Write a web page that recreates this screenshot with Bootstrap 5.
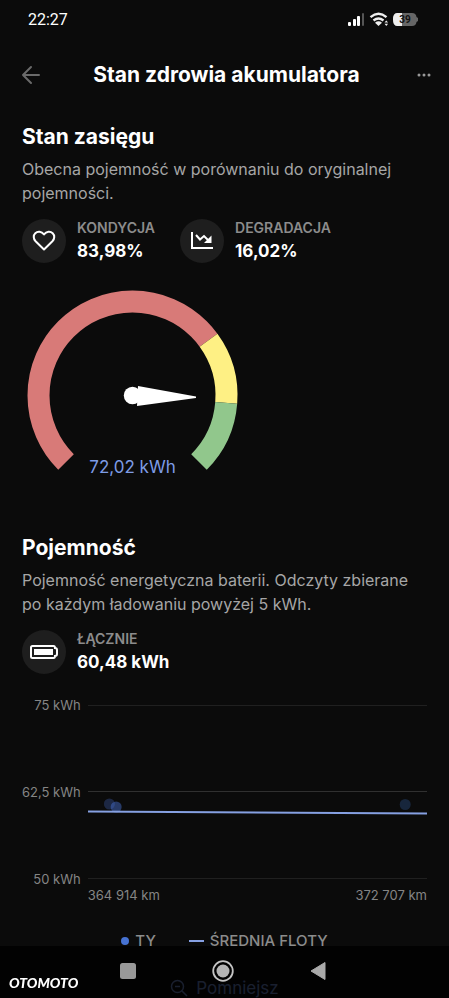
<!DOCTYPE html>
<html lang="pl" data-bs-theme="dark">
<head>
<meta charset="utf-8">
<meta name="viewport" content="width=device-width, initial-scale=1">
<title>Stan zdrowia akumulatora</title>
<link href="https://cdn.jsdelivr.net/npm/bootstrap@5.3.0/dist/css/bootstrap.min.css" rel="stylesheet">
<style>
  body { font-family: Inter, "Liberation Sans", sans-serif; background: #0b0b0b; color: #fff; }
  .status-bar { height: 40px; padding: 0 30px 0 28px; font-family: Roboto, sans-serif; font-size: 16px; }
  .top-bar { height: 70px; padding: 0 16px 0 20px; }
  .top-bar h1 { font-size: 21px; line-height: 28px; font-weight: 700; }
  .icon-btn { width: 24px; height: 24px; color: #6a6a6a; }
  .screen { padding: 13px 22px 0; }
  .screen h2 { font-size: 21px; line-height: 28px; font-weight: 700; margin: 0 0 6px; }
  .lead-text { font-size: 16px; line-height: 24px; color: #a6a6a6; margin: 0 0 13px; }
  .stats { gap: 25px; }
  .stat { gap: 11px; }
  .stat-icon { width: 44px; height: 44px; background: #1e1e1e; }
  .stat dt { font-size: 14px; line-height: 20px; font-weight: 600; color: #8c8c8c; }
  .stat dd { font-size: 17px; line-height: 26px; font-weight: 700; margin: 0; }
  .gauge { width: 220px; margin: 21px 0 55px; }
  .chart { gap: 7px; margin-top: 20px; font-size: 13px; line-height: 20px; color: #858585; }
  .plot { height: 194px; }
  .axis-x { margin-top: -4px; }
  .legend-row { gap: 33px; margin-top: 26px; font-size: 15px; line-height: 20px; font-weight: 500; color: #8c8c8c; }
  .legend-row span { gap: 6px; }
  .zoom-out { font-size: 17px; line-height: 18px; color: #7e9ce6; margin-top: 28px; }
  .system-nav { height: 52px; padding: 0 4px 2px 0; background: rgba(0, 0, 0, .8); }
  .system-nav .keys { gap: 73px; }
  .brand-name { left: 9px; bottom: 5px; font-family: Lato, sans-serif; font-size: 14px; line-height: 20px; font-weight: 900; font-style: italic; }
</style>
<script src="https://cdn.jsdelivr.net/npm/bootstrap@5.3.0/dist/js/bootstrap.bundle.min.js" defer></script>
</head>
<body class="vh-100 overflow-hidden">

<div class="status-bar d-flex align-items-center justify-content-between">
  <span>22:27</span>
  <svg width="72" height="16" viewBox="0 0 72 16" aria-label="Bateria 39%">
    <g fill="#fff"><rect x="1" y="10" width="3" height="4" rx="1"/><rect x="6" y="7" width="3" height="7" rx="1"/><rect x="10" y="4" width="3" height="10" rx="1"/></g>
    <rect x="15" y="1" width="2" height="13" rx="1" fill="#555"/>
    <g fill="none" stroke="#eee" stroke-width="2.4"><path d="M23.500 5.200Q31.500-1.500 39.500 5.200"/><path d="M26.500 8.500Q31.500 4.500 36.500 8.500"/></g>
    <path d="M28 10.700Q31.500 8 35 10.700L31.500 14Z" fill="#eee"/>
    <path d="M37.500 10.500l1.800-2 1.800 2zM37.500 11.700h3.600l-1.800 2.300z" fill="#eee"/>
    <path d="M50 1H65Q69 1 69.500 5L71 6V9L69.500 10Q69 14 65 14H50Q46 14 46 7.500T50 1Z" fill="#666"/>
    <path d="M55 1H50Q46 1 46 7.500T50 14H55Z" fill="#eee"/>
    <text x="58" y="11" text-anchor="middle" font-size="10" font-weight="700" fill="#111">39</text>
  </svg>
</div>

<header class="top-bar d-flex align-items-center justify-content-between">
  <button type="button" class="btn icon-btn p-0 border-0 d-flex" aria-label="Wstecz">
    <svg width="24" height="24" viewBox="0 0 24 24" fill="none" stroke="currentColor" stroke-width="2" stroke-linecap="round" stroke-linejoin="round"><path d="M19 12H3M11 4l-8 8 8 8"/></svg>
  </button>
  <h1 class="m-0">Stan zdrowia akumulatora</h1>
  <button type="button" class="btn icon-btn p-0 border-0 d-flex" aria-label="Więcej">
    <svg width="24" height="24" viewBox="0 0 24 24" fill="#999"><circle cx="10" cy="12" r="1.500"/><circle cx="15" cy="12" r="1.500"/><circle cx="20" cy="12" r="1.500"/></svg>
  </button>
</header>

<main class="screen">
  <section>
    <h2>Stan zasięgu</h2>
    <p class="lead-text">Obecna pojemność w porównaniu do oryginalnej pojemności.</p>
    <div class="stats d-flex">
      <div class="stat d-flex align-items-center">
        <span class="stat-icon rounded-circle d-flex align-items-center justify-content-center">
          <svg width="24" height="24" viewBox="0 0 24 24" fill="none" stroke="#fff" stroke-width="2" stroke-linejoin="round"><path d="M12 20.500L3.600 12.300C1.200 9.800 1.200 6.300 3.300 4.300C5.600 2.100 9.500 2.300 12 5.400C14.500 2.300 18.400 2.100 20.700 4.300C22.800 6.300 22.800 9.800 20.400 12.300Z"/></svg>
        </span>
        <dl class="m-0"><dt>KONDYCJA</dt><dd>83,98%</dd></dl>
      </div>
      <div class="stat d-flex align-items-center">
        <span class="stat-icon rounded-circle d-flex align-items-center justify-content-center">
          <svg width="24" height="24" viewBox="0 0 24 24" fill="none" stroke="#fff" stroke-width="2"><path d="M2 3V19H23M6 6l4 4.500 4-3.500 6 6"/><path d="M21.500 6.500V14H14Z" fill="#fff" stroke="none"/></svg>
        </span>
        <dl class="m-0"><dt>DEGRADACJA</dt><dd>16,02%</dd></dl>
      </div>
    </div>
    <svg class="gauge d-block" viewBox="0 0 220 194" role="img" aria-label="72,02 kWh">
      <g fill="none" stroke-width="22">
        <circle cx="110.500" cy="110.500" r="94" pathLength="360" stroke="#d87a78" stroke-dasharray="189 171" transform="rotate(135 110.500 110.500)"/>
        <circle cx="110.500" cy="110.500" r="94" pathLength="360" stroke="#fef084" stroke-dasharray="40.500 319.500" transform="rotate(-36 110.500 110.500)"/>
        <circle cx="110.500" cy="110.500" r="94" pathLength="360" stroke="#91c78c" stroke-dasharray="40.500 319.500" transform="rotate(4.500 110.500 110.500)"/>
      </g>
      <g fill="#fff"><circle cx="110.500" cy="110.500" r="8.700"/><path d="M116 101L174 111.600V113L115 121Z"/></g>
      <text x="110.500" y="188" text-anchor="middle" font-size="17" fill="#7e9ce6">72,02 kWh</text>
    </svg>
  </section>

  <section>
    <h2>Pojemność</h2>
    <p class="lead-text">Pojemność energetyczna baterii. Odczyty zbierane po każdym ładowaniu powyżej 5 kWh.</p>
    <div class="stat d-flex align-items-center">
      <span class="stat-icon rounded-circle d-flex align-items-center justify-content-center">
        <svg width="30" height="16" viewBox="0 0 30 16"><path d="M3.500 2H24.500Q26 2 26 4Q28 4 28 6V10Q28 12 26 12Q26 14 24.500 14H3.500Q2 14 2 12.500V3.500Q2 2 3.500 2Z" fill="none" stroke="#fff" stroke-width="2"/><rect x="5" y="5" width="19" height="6" fill="#fff"/></svg>
      </span>
      <dl class="m-0"><dt>ŁĄCZNIE</dt><dd>60,48 kWh</dd></dl>
    </div>
    <div class="chart d-flex">
      <div class="plot d-flex flex-column justify-content-between text-end text-nowrap">
        <span>75 kWh</span><span>62,5 kWh</span><span>50 kWh</span>
      </div>
      <div class="flex-grow-1">
        <svg class="plot d-block w-100" role="img" aria-label="Pojemność według przebiegu">
          <g stroke="#202020"><path d="M0 10.500H2000"/><path d="M0 96.500H2000" stroke="#303030"/><path d="M0 183.500H2000"/></g>
          <g fill="#4a74d8"><circle cx="6.300%" cy="109" r="5.500" opacity=".28"/><circle cx="8.300%" cy="112" r="5.500" opacity=".45"/><circle cx="93.500%" cy="109.500" r="5.500" fill="#3566b0" opacity=".3"/></g>
          <line x1="0" y1="116.500" x2="100%" y2="118.500" stroke="#86a0e2" stroke-width="2"/>
        </svg>
        <div class="axis-x d-flex justify-content-between"><span>364 914 km</span><span>372 707 km</span></div>
      </div>
    </div>
    <div class="legend-row d-flex justify-content-center">
      <span class="d-flex align-items-center"><svg width="8" height="8"><circle cx="4" cy="4" r="4" fill="#4672d2"/></svg>TY</span>
      <span class="d-flex align-items-center"><svg width="15" height="2"><rect width="15" height="2" fill="#86a0e2"/></svg>ŚREDNIA FLOTY</span>
    </div>
    <button type="button" class="zoom-out btn border-0 p-0 d-flex align-items-center gap-2 mx-auto">
      <svg width="18" height="18" viewBox="0 0 18 18" fill="none" stroke="currentColor" stroke-width="1.500"><circle cx="7.500" cy="7.500" r="6"/><path d="M12 12l5 5M5 7.500h5"/></svg>Pomniejsz
    </button>
  </section>
</main>

<nav class="system-nav fixed-bottom d-flex align-items-center justify-content-center" aria-label="Nawigacja systemowa">
  <div class="keys d-flex align-items-center">
    <button type="button" class="btn p-0 border-0 d-flex" aria-label="Ostatnie"><svg width="22" height="22"><rect x="3" y="3" width="16" height="16" rx="2.500" fill="#999"/></svg></button>
    <button type="button" class="btn p-0 border-0 d-flex" aria-label="Ekran główny"><svg width="22" height="22"><circle cx="11" cy="11" r="9.800" fill="none" stroke="#c4c4c4" stroke-width="1.800"/><circle cx="11" cy="11" r="6.500" fill="#b5b5b5"/></svg></button>
    <button type="button" class="btn p-0 border-0 d-flex" aria-label="Cofnij"><svg width="22" height="22"><path d="M4 11L18 2.500V19.500Z" fill="#aaa" stroke="#aaa" stroke-linejoin="round"/></svg></button>
  </div>
  <span class="brand-name position-absolute">OTOMOTO</span>
</nav>
</body>
</html>
